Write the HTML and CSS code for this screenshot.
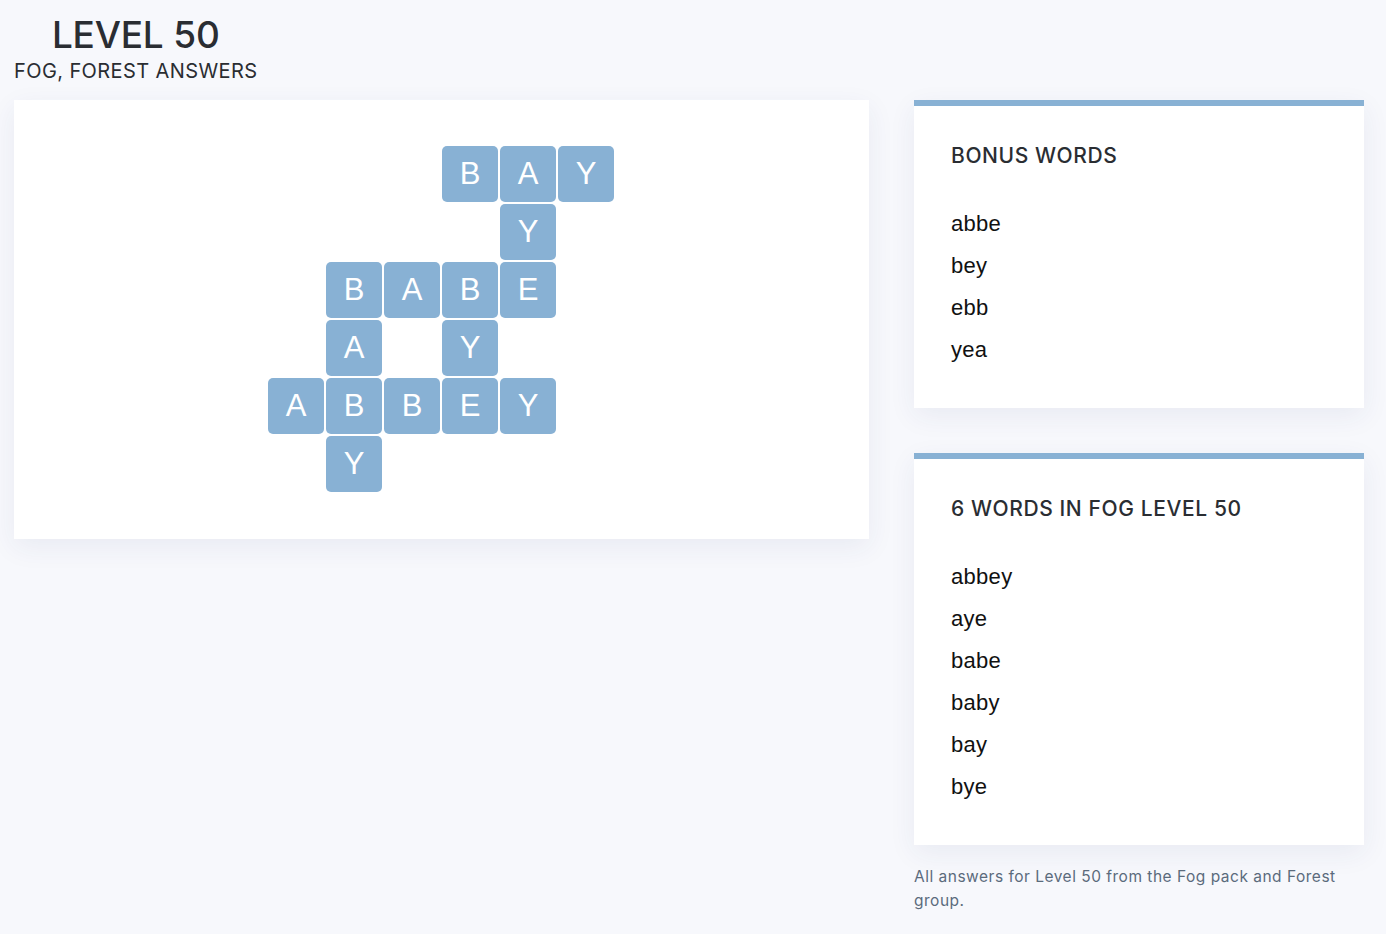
FILE: index.html
```html
<!DOCTYPE html>
<html lang="en">
<head>
<meta charset="utf-8">
<title>Level 50 - Fog, Forest Answers</title>
<link rel="stylesheet" href="styles.css">
</head>
<body>
<header class="header">
  <h1 class="title">LEVEL 50</h1>
  <p class="subtitle">FOG, FOREST ANSWERS</p>
</header>
<main class="layout">
  <section class="board-card">
    <div class="board">
      <div class="tile r1 c4">B</div><div class="tile r1 c5">A</div><div class="tile r1 c6">Y</div>
      <div class="tile r2 c5">Y</div>
      <div class="tile r3 c2">B</div><div class="tile r3 c3">A</div><div class="tile r3 c4">B</div><div class="tile r3 c5">E</div>
      <div class="tile r4 c2">A</div><div class="tile r4 c4">Y</div>
      <div class="tile r5 c1">A</div><div class="tile r5 c2">B</div><div class="tile r5 c3">B</div><div class="tile r5 c4">E</div><div class="tile r5 c5">Y</div>
      <div class="tile r6 c2">Y</div>
    </div>
  </section>
  <aside class="side">
    <section class="word-card">
      <h2 class="card-title">BONUS WORDS</h2>
      <ul class="word-list">
        <li>abbe</li>
        <li>bey</li>
        <li>ebb</li>
        <li>yea</li>
      </ul>
    </section>
    <section class="word-card">
      <h2 class="card-title">6 WORDS IN FOG LEVEL 50</h2>
      <ul class="word-list">
        <li>abbey</li>
        <li>aye</li>
        <li>babe</li>
        <li>baby</li>
        <li>bay</li>
        <li>bye</li>
      </ul>
    </section>
    <p class="note">All answers for Level 50 from the Fog pack and Forest group.</p>
  </aside>
</main>
</body>
</html>
```

FILE: styles.css
```css
* { box-sizing: border-box; }

body {
  margin: 0;
  padding: 12px 22px 0 14px;
  background: #f7f8fc;
  font-family: Inter, "Liberation Sans", sans-serif;
  color: #2a2d32;
}

.header {
  display: inline-flex;
  flex-direction: column;
  align-items: center;
  margin-bottom: 16px;
}

.title {
  margin: 0;
  font-size: 37px;
  line-height: 46px;
  font-weight: 500;
  letter-spacing: -0.2px;
}

.subtitle {
  margin: 0;
  font-size: 20px;
  line-height: 26px;
  font-weight: 400;
  letter-spacing: 0.4px;
}

.layout {
  display: flex;
  gap: 45px;
  align-items: flex-start;
}

.board-card {
  width: 855px;
  flex: none;
  background: #fff;
  padding: 46px 0 47px;
  display: flex;
  justify-content: center;
  box-shadow: 0 8px 26px rgba(40, 60, 110, 0.07);
}

.board {
  display: grid;
  grid-template-columns: repeat(6, 56px);
  grid-template-rows: repeat(6, 56px);
  gap: 2px;
  margin-right: 1px;
}

.tile {
  background: #88b1d4;
  border-radius: 5px;
  color: #fff;
  font-family: "Liberation Sans", Arial, sans-serif;
  font-size: 31px;
  display: flex;
  align-items: center;
  justify-content: center;
}

.r1 { grid-row: 1; } .r2 { grid-row: 2; } .r3 { grid-row: 3; }
.r4 { grid-row: 4; } .r5 { grid-row: 5; } .r6 { grid-row: 6; }
.c1 { grid-column: 1; } .c2 { grid-column: 2; } .c3 { grid-column: 3; }
.c4 { grid-column: 4; } .c5 { grid-column: 5; } .c6 { grid-column: 6; }

.side {
  width: 450px;
  flex: none;
  display: flex;
  flex-direction: column;
  gap: 45px;
}

.word-card {
  background: #fff;
  border-top: 6px solid #88b1d4;
  padding: 35px 37px 37px;
  box-shadow: 0 8px 26px rgba(40, 60, 110, 0.07);
}

.card-title {
  margin: 0 0 32px;
  font-size: 21px;
  line-height: 30px;
  font-weight: 500;
  letter-spacing: 0.6px;
  color: #2a2d32;
}

.word-list {
  list-style: none;
  margin: 0;
  padding: 0;
  font-family: "Liberation Sans", Arial, sans-serif;
  font-size: 22px;
  letter-spacing: 0.3px;
  color: #111;
}

.word-list li {
  line-height: 42px;
}

.note {
  margin: -25px 0 0;
  font-size: 15.5px;
  line-height: 24px;
  letter-spacing: 0.5px;
  color: #5b6b7c;
}
```
